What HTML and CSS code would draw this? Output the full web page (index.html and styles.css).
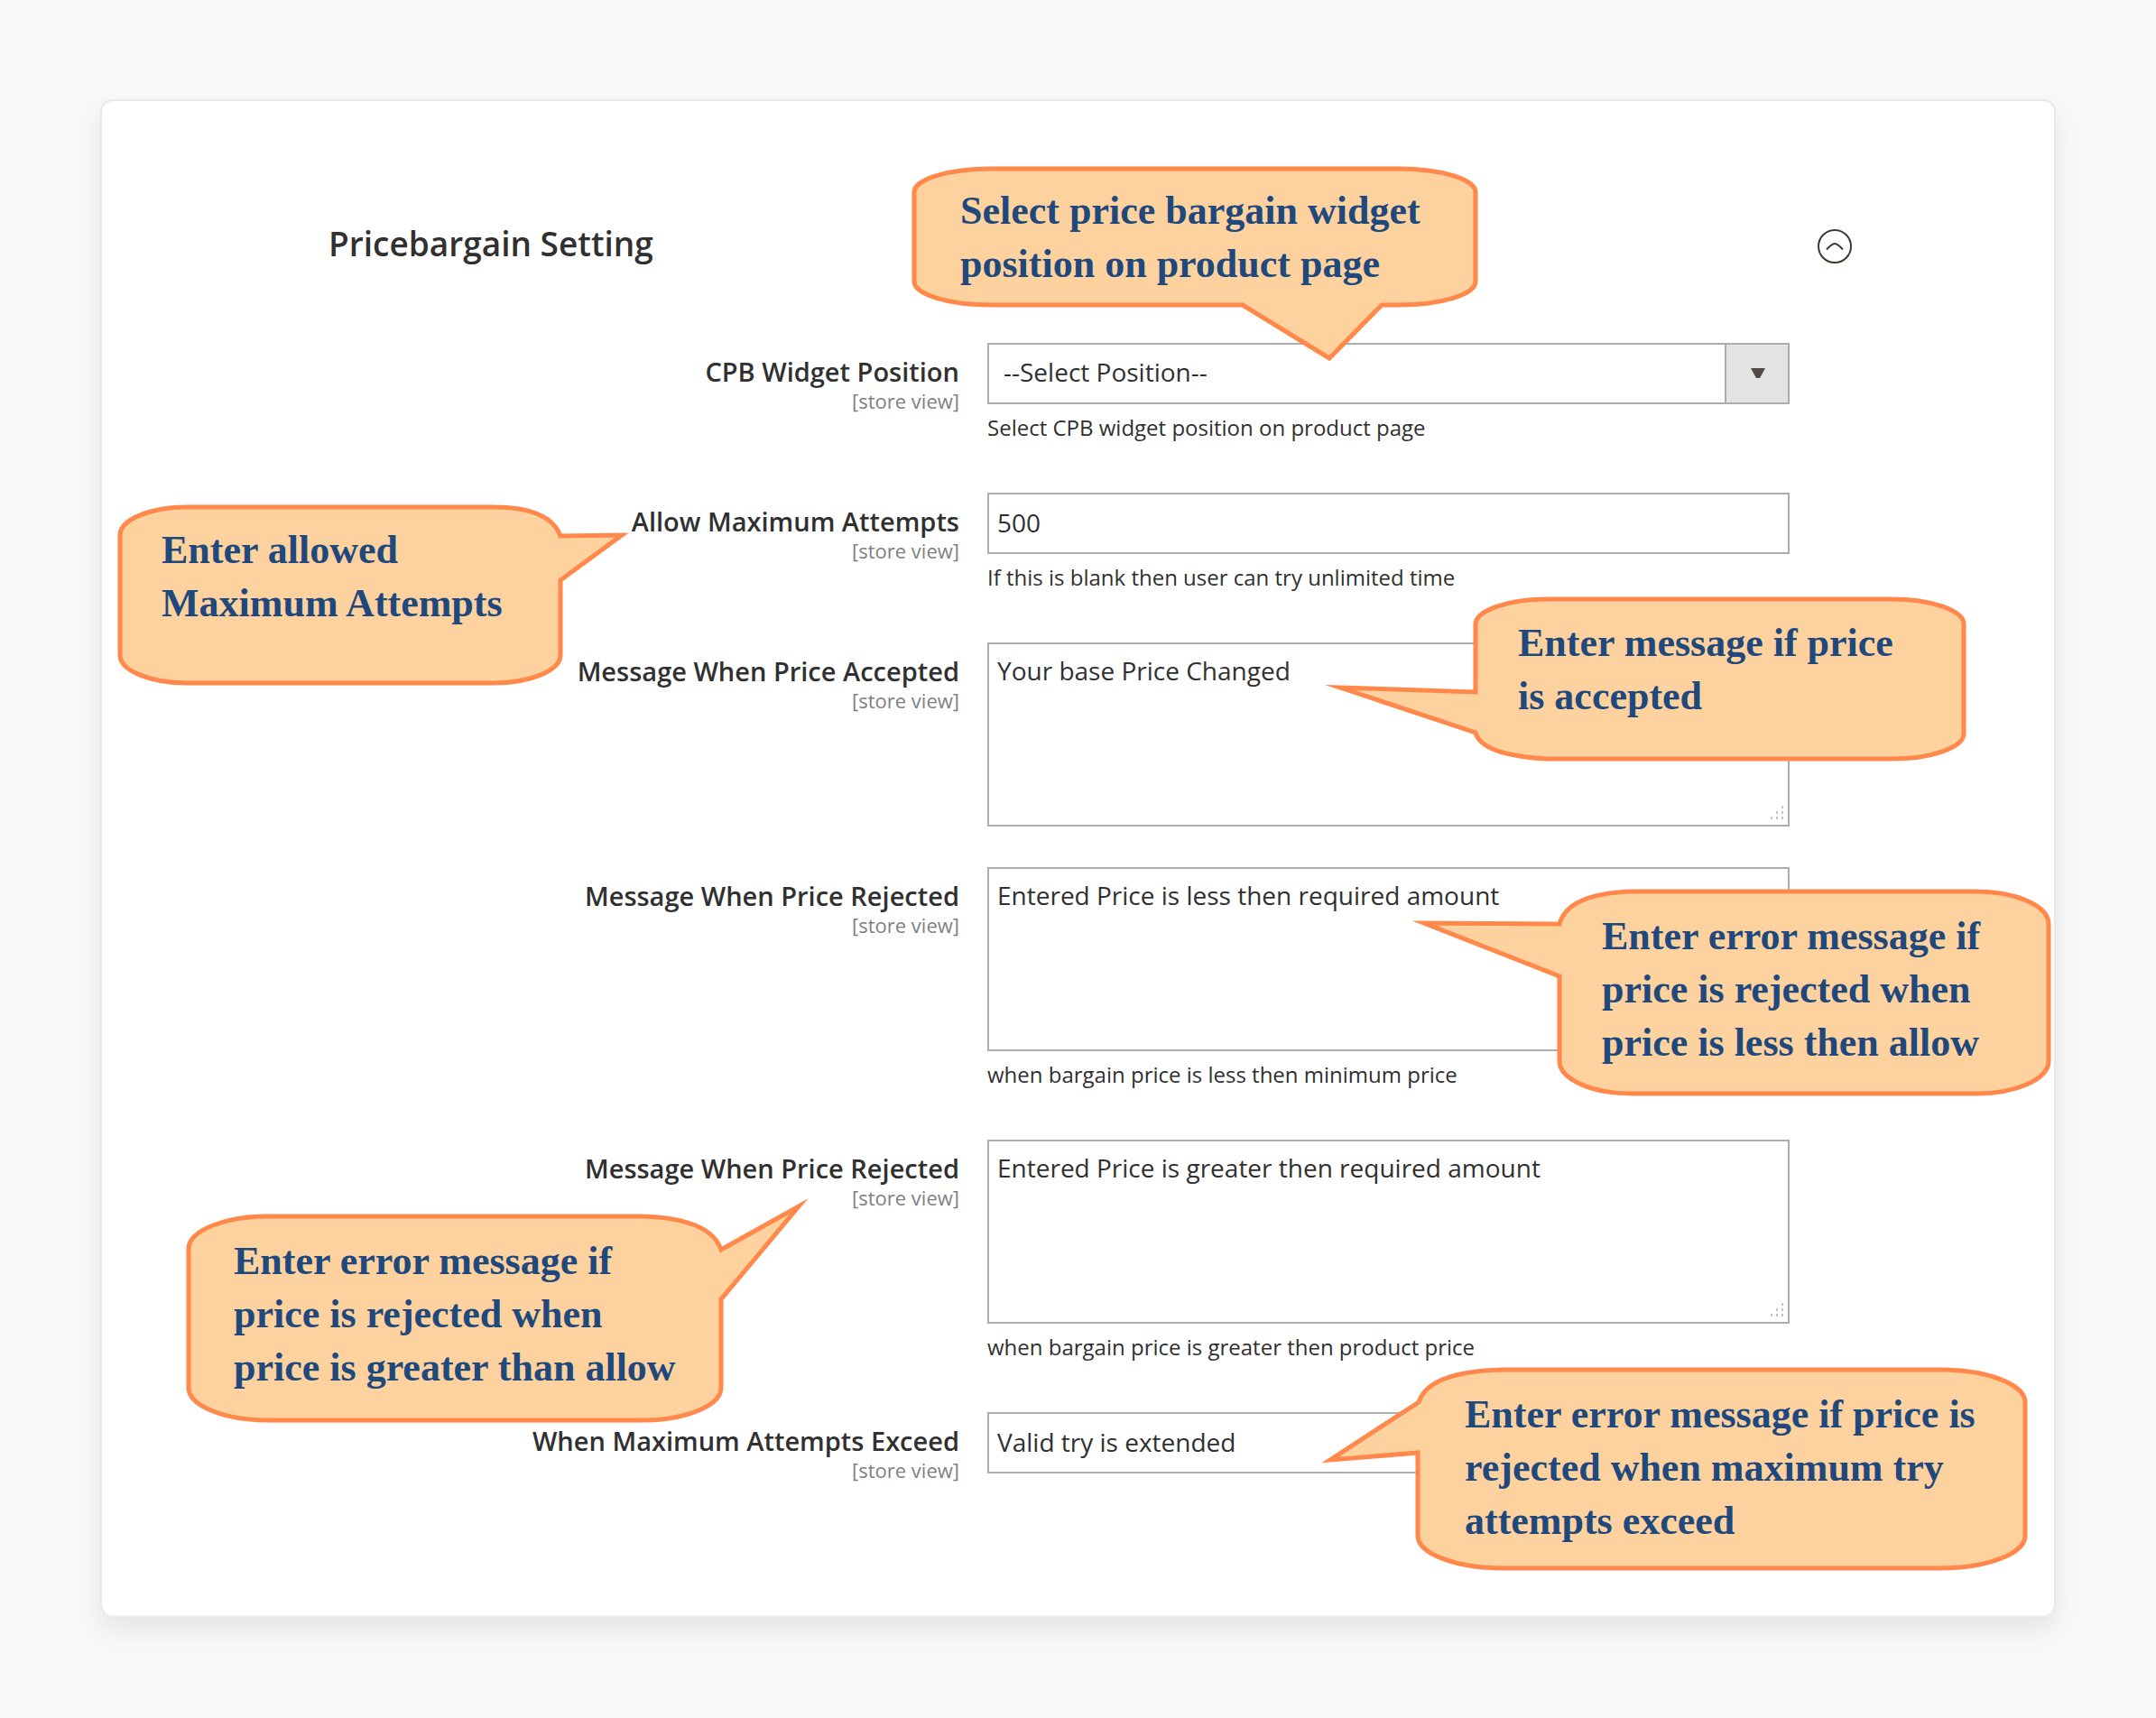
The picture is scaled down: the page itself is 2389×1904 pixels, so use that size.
FILE: index.html
```html
<!DOCTYPE html>
<html lang="en">
<head>
<meta charset="utf-8">
<meta name="viewport" content="width=device-width, initial-scale=1">
<title>Pricebargain Setting</title>
<link rel="stylesheet" href="styles.css">
</head>
<body>
<main class="card">
  <header class="section-head">
    <h1 class="section-title">Pricebargain Setting</h1>
    <button class="toggle" type="button" aria-label="Collapse section" aria-expanded="true">
      <svg width="40" height="40" viewBox="0 0 40 40" aria-hidden="true"><circle cx="20" cy="20" r="18"/><path d="M11 23.500 Q17 17 20 17 Q23 17 29 23.500"/></svg>
    </button>
  </header>

  <form class="form">
    <div class="row">
      <div class="label-cell">
        <label class="label" for="position">CPB Widget Position</label>
        <span class="scope">[store view]</span>
      </div>
      <div class="control-cell">
        <div class="control">
          <select class="field select" id="position"><option>--Select Position--</option></select>
          <svg class="arrow" width="16" height="12" viewBox="0 0 16 12" aria-hidden="true"><path d="M0 0H16L10 11H6Z"/></svg>
        </div>
        <p class="note">Select CPB widget position on product page</p>
        <aside class="callout callout-position">
          <svg class="bubble" aria-hidden="true"><path d="M82 1H534A85 26 0 0 1 619 27V126A85 26 0 0 1 534 152H515L457 211L361 152H82A85 26 0 0 1 -3 126V27A85 26 0 0 1 82 1Z"/></svg>
          <p class="callout-text">Select price bargain widget<br>position on product page</p>
        </aside>
      </div>
    </div>

    <div class="row">
      <div class="label-cell">
        <label class="label" for="attempts">Allow Maximum Attempts</label>
        <span class="scope">[store view]</span>
        <aside class="callout callout-attempts">
          <svg class="bubble" aria-hidden="true"><path d="M76 0H416Q478 0 490 32L558 31L490 81V164A74 31 0 0 1 416 195H76A74 31 0 0 1 2 164V31A74 31 0 0 1 76 0Z"/></svg>
          <p class="callout-text">Enter allowed<br>Maximum Attempts</p>
        </aside>
      </div>
      <div class="control-cell">
        <input class="field" id="attempts" type="text" value="500">
        <p class="note">If this is blank then user can try unlimited time</p>
      </div>
    </div>

    <div class="row">
      <div class="label-cell">
        <label class="label" for="accepted">Message When Price Accepted</label>
        <span class="scope">[store view]</span>
      </div>
      <div class="control-cell">
        <div class="control">
          <textarea class="field area" id="accepted">Your base Price Changed</textarea>
          <svg class="grip" width="16" height="16" viewBox="0 0 16 16" aria-hidden="true"><path d="M13 0h2v3h-2zM7 6h2v3h-2zM13 6h2v3h-2zM1 12h2v3h-2zM7 12h2v3h-2zM13 12h2v3h-2z"/></svg>
        </div>
        <aside class="callout callout-accepted">
          <svg class="bubble" aria-hidden="true"><path d="M80 -1H462A80 28 0 0 1 542 27V148A80 28 0 0 1 462 176H80Q8 172 1 147L-149 97L1 102V27A80 28 0 0 1 80 -1Z"/></svg>
          <p class="callout-text">Enter message if price<br>is accepted</p>
        </aside>
      </div>
    </div>

    <div class="row">
      <div class="label-cell">
        <label class="label" for="rejected-low">Message When Price Rejected</label>
        <span class="scope">[store view]</span>
      </div>
      <div class="control-cell">
        <div class="control">
          <textarea class="field area" id="rejected-low">Entered Price is less then required amount</textarea>
          <svg class="grip" width="16" height="16" viewBox="0 0 16 16" aria-hidden="true"><path d="M13 0h2v3h-2zM7 6h2v3h-2zM13 6h2v3h-2zM1 12h2v3h-2zM7 12h2v3h-2zM13 12h2v3h-2z"/></svg>
        </div>
        <p class="note">when bargain price is less then minimum price</p>
        <aside class="callout callout-rejected-low">
          <svg class="bubble" aria-hidden="true"><path d="M82 -2H463A80 36 0 0 1 543 34V186A80 36 0 0 1 463 222H82A80 36 0 0 1 1 186V92L-149 33L1 34Q10 0 82 -2Z"/></svg>
          <p class="callout-text">Enter error message if<br>price is rejected when<br>price is less then allow</p>
        </aside>
      </div>
    </div>

    <div class="row">
      <div class="label-cell">
        <label class="label" for="rejected-high">Message When Price Rejected</label>
        <span class="scope">[store view]</span>
        <aside class="callout callout-rejected-high">
          <svg class="bubble" aria-hidden="true"><path d="M86 -2H500Q576 0 588 35L674 -13L588 90V188A88 36 0 0 1 500 224H86A88 36 0 0 1 -2 188V34A88 36 0 0 1 86 -2Z"/></svg>
          <p class="callout-text">Enter error message if<br>price is rejected when<br>price is greater than allow</p>
        </aside>
      </div>
      <div class="control-cell">
        <div class="control">
          <textarea class="field area" id="rejected-high">Entered Price is greater then required amount</textarea>
          <svg class="grip" width="16" height="16" viewBox="0 0 16 16" aria-hidden="true"><path d="M13 0h2v3h-2zM7 6h2v3h-2zM13 6h2v3h-2zM1 12h2v3h-2zM7 12h2v3h-2zM13 12h2v3h-2z"/></svg>
        </div>
        <p class="note">when bargain price is greater then product price</p>
      </div>
    </div>

    <div class="row">
      <div class="label-cell">
        <label class="label" for="exceed">When Maximum Attempts Exceed</label>
        <span class="scope">[store view]</span>
      </div>
      <div class="control-cell">
        <input class="field" id="exceed" type="text" value="Valid try is extended">
        <aside class="callout callout-exceed">
          <svg class="bubble" aria-hidden="true"><path d="M90 -2H575A94 36 0 0 1 669 34V182A94 36 0 0 1 575 218H90A94 36 0 0 1 -4 182V90L-101 98L-3 34Q8 0 90 -2Z"/></svg>
          <p class="callout-text">Enter error message if price is<br>rejected when maximum try<br>attempts exceed</p>
        </aside>
      </div>
    </div>
  </form>
</main>
</body>
</html>
```
FILE: styles.css
```css
*, *::before, *::after { box-sizing: border-box; }

body {
  margin: 0;
  padding: 110px 111px;
  background: #f8f8f8;
  color: #303030;
  font-family: "Open Sans", "Noto Sans", sans-serif;
  font-size: 28px;
  line-height: 32px;
}

.card {
  padding: 134px 0 145px;
  background: #fff;
  border: 2px solid #e8e8e8;
  border-bottom-color: #f0f0f0;
  border-radius: 14px;
  box-shadow: 0 14px 28px rgba(0, 0, 0, 0.08);
}

.section-head {
  display: flex;
  justify-content: space-between;
  align-items: center;
  padding: 0 223px 0 251px;
  margin-bottom: 86px;
}

.section-title {
  margin: 0;
  font-size: 37px;
  line-height: 48px;
  font-weight: 600;
}

.toggle {
  display: block;
  padding: 6px 0 0;
  border: 0;
  background: none;
  line-height: 0;
}

.toggle svg {
  fill: none;
  stroke: #41362f;
  stroke-width: 2;
}

.form {
  display: flex;
  flex-direction: column;
}

.row {
  display: grid;
  grid-template-columns: minmax(0, 950fr) minmax(0, 889fr) minmax(0, 262fr);
  column-gap: 31px;
  margin-bottom: 56px;
}

.row:nth-child(3) { margin-bottom: 45px; }
.row:last-child { margin-bottom: 0; }

.label-cell {
  position: relative;
  padding-top: 16px;
  text-align: right;
}

.label {
  display: block;
  font-size: 29px;
  font-weight: 600;
}

.scope {
  display: block;
  color: #808080;
  font-size: 22px;
}

.control-cell,
.control {
  position: relative;
}

.field {
  display: block;
  width: 100%;
  height: 68px;
  margin: 0;
  padding: 0 9px 2px;
  border: 2px solid #adadad;
  border-radius: 0;
  background: #fff;
  color: #303030;
  font: inherit;
}

.select {
  appearance: none;
  padding: 0 80px 4px 16px;
  background: linear-gradient(90deg, #adadad 2px, #e3e3e3 2px) right / 70px 100% no-repeat #fff;
}

.arrow {
  position: absolute;
  top: 28px;
  right: 27px;
  fill: #514943;
  pointer-events: none;
}

.area {
  height: 204px;
  padding: 13px 9px;
  resize: none;
}

.grip {
  position: absolute;
  right: 6px;
  bottom: 7px;
  fill: #c4c4c4;
  pointer-events: none;
}

.note {
  margin: 10px 0 0;
  font-size: 24px;
}

.callout {
  position: absolute;
  z-index: 1;
  padding: 18px 48px;
  color: #1f497d;
  font: bold 44px/59px "Liberation Serif", "Times New Roman", serif;
  text-align: left;
  white-space: nowrap;
}

.callout-text {
  position: relative;
  margin: 0;
}

.bubble {
  position: absolute;
  inset: 0;
  overflow: visible;
  fill: #fed29e;
  stroke: #ff884a;
  stroke-width: 5;
  stroke-miterlimit: 10;
}

.callout-position { top: -194px; left: -78px; }
.callout-attempts { top: 16px; right: 442px; width: 490px; }
.callout-accepted { top: -47px; left: 540px; }
.callout-rejected-low { top: 29px; left: 633px; }
.callout-rejected-high { top: 87px; right: 262px; width: 590px; }
.callout-exceed { top: -45px; left: 481px; }
```
